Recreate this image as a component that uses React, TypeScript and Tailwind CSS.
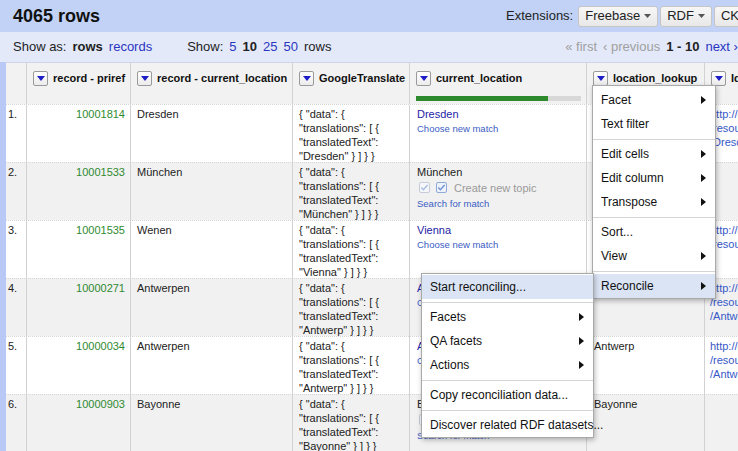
import { clsx } from 'clsx'

type Cur = { kind: 'match' | 'new'; name: string }
type Row = {
  n: string
  priref: string
  loc: string
  gt: string
  cur: Cur
  lookup: string
  id: string[]
}

const rows: Row[] = [
  { n: '1.', priref: '10001814', loc: 'Dresden', gt: 'Dresden', cur: { kind: 'match', name: 'Dresden' }, lookup: 'Dresden', id: ['http://dbpedia.org', '/resource', '/Dresden'] },
  { n: '2.', priref: '10001533', loc: 'München', gt: 'München', cur: { kind: 'new', name: 'München' }, lookup: '', id: [] },
  { n: '3.', priref: '10001535', loc: 'Wenen', gt: 'Vienna', cur: { kind: 'match', name: 'Vienna' }, lookup: 'Vienna', id: ['http://dbpedia.org', '/resource'] },
  { n: '4.', priref: '10000271', loc: 'Antwerpen', gt: 'Antwerp', cur: { kind: 'match', name: 'Antwerp' }, lookup: 'Antwerp', id: ['http://dbpedia.org', '/resource', '/Antwerp'] },
  { n: '5.', priref: '10000034', loc: 'Antwerpen', gt: 'Antwerp', cur: { kind: 'match', name: 'Antwerp' }, lookup: 'Antwerp', id: ['http://dbpedia.org', '/resource', '/Antwerp'] },
  { n: '6.', priref: '10000903', loc: 'Bayonne', gt: 'Bayonne', cur: { kind: 'new', name: 'Bayonne' }, lookup: 'Bayonne', id: [] },
]

type Item = { label: string; sub?: boolean; active?: boolean } | 'sep'

const columnMenu: Item[] = [
  { label: 'Facet', sub: true },
  { label: 'Text filter' },
  'sep',
  { label: 'Edit cells', sub: true },
  { label: 'Edit column', sub: true },
  { label: 'Transpose', sub: true },
  'sep',
  { label: 'Sort...' },
  { label: 'View', sub: true },
  'sep',
  { label: 'Reconcile', sub: true, active: true },
]

const reconMenu: Item[] = [
  { label: 'Start reconciling...', active: true },
  'sep',
  { label: 'Facets', sub: true },
  { label: 'QA facets', sub: true },
  { label: 'Actions', sub: true },
  'sep',
  { label: 'Copy reconciliation data...' },
  'sep',
  { label: 'Discover related RDF datasets...' },
]

function Caret() {
  return (
    <svg width="7" height="4" viewBox="0 0 7 4" className="ml-[4px]">
      <polygon points="0,0 7,0 3.5,4" fill="#555" />
    </svg>
  )
}

function ExtButton({ label }: { label: string }) {
  return (
    <button className="flex h-[21px] items-center rounded-[3px] border border-[#c6c6c6] bg-gradient-to-b from-[#f7f7f7] to-[#e8e8e8] px-[6px] text-[13px] text-[#222]">
      {label}
      <Caret />
    </button>
  )
}

function DropBtn() {
  return (
    <span className="flex h-[15px] w-[15px] shrink-0 items-center justify-center rounded-[2px] border border-[#9a9a9a] bg-gradient-to-b from-white to-[#ececec]">
      <svg width="8" height="5" viewBox="0 0 8 5">
        <polygon points="0,0 8,0 4,5" fill="#1c1cc8" />
      </svg>
    </span>
  )
}

function Check({ dim }: { dim?: boolean }) {
  return (
    <svg width="11" height="11" viewBox="0 0 11 11">
      <rect x="0.5" y="0.5" width="10" height="10" rx="1.5" fill={dim ? '#f5f7fb' : '#eef3fb'} stroke={dim ? '#c5ccd8' : '#8eaad8'} />
      <path d="M2.3 5.6 L4.4 7.7 L8.6 3" fill="none" stroke={dim ? '#a9bde0' : '#6f93d3'} strokeWidth="1.4" />
    </svg>
  )
}

function Arrow() {
  return (
    <svg width="5" height="8" viewBox="0 0 5 8">
      <polygon points="0,0 5,4 0,8" fill="#111" />
    </svg>
  )
}

function Menu({ items, className }: { items: Item[]; className: string }) {
  return (
    <div className={clsx('absolute border border-[#a9a9a9] bg-white shadow-[1px_2px_5px_rgba(0,0,0,0.28)]', className)}>
      {items.map((it, i) =>
        it === 'sep' ? (
          <div key={i} className="flex h-[6px] items-center">
            <div className="h-px w-full bg-[#d4d4d4]" />
          </div>
        ) : (
          <div
            key={i}
            className={clsx(
              'flex h-[24px] items-center justify-between whitespace-nowrap pl-[8px] pr-[9px] text-[12px] text-[#111]',
              it.active && 'bg-[#dae4f5]',
            )}
          >
            <span>{it.label}</span>
            {it.sub && <Arrow />}
          </div>
        ),
      )}
    </div>
  )
}

function HeadCell({ label, children }: { label: string; children?: React.ReactNode }) {
  return (
    <div className="border-r border-[#d2d2d2] pl-[6px] pt-[7px]">
      <div className="flex items-center gap-[5px] whitespace-nowrap">
        <DropBtn />
        <span className="text-[11px] font-bold text-[#111]">{label}</span>
      </div>
      {children}
    </div>
  )
}

function CurCell({ cur }: { cur: Cur }) {
  if (cur.kind === 'match') {
    return (
      <div className="border-r border-[#d2d2d2] pl-[7px] pt-[2px]">
        <div className="h-[14px] text-[11px] leading-[14px] text-[#2424a6]">{cur.name}</div>
        <div className="h-[16px] text-[9.5px] leading-[16px] text-[#3b5cc4]">Choose new match</div>
      </div>
    )
  }
  return (
    <div className="border-r border-[#d2d2d2] pl-[7px] pt-[2px]">
      <div className="h-[14px] text-[11px] leading-[14px]">{cur.name}</div>
      <div className="flex h-[17px] items-center pl-[2px]">
        <Check dim />
        <span className="ml-[6px]">
          <Check />
        </span>
        <span className="ml-[7px] text-[11px] text-[#9a9a9a]">Create new topic</span>
      </div>
      <div className="h-[15px] text-[9.5px] leading-[15px] text-[#3b5cc4]">Search for match</div>
    </div>
  )
}

export default function App() {
  return (
    <div className="relative h-[451px] w-[738px] overflow-hidden bg-[#e3e9f9] font-['Liberation_Sans',Arial,sans-serif] text-[#222]">
      {/* title bar */}
      <header className="flex h-[32px] items-center bg-[#c1d2f6] pl-[13px]">
        <h1 className="whitespace-nowrap text-[18px] font-bold text-[#111]">4065 rows</h1>
        <div className="-mr-[37px] ml-auto flex shrink-0 items-center gap-[2px] whitespace-nowrap">
          <span className="mr-[3px] text-[13px]">Extensions:</span>
          <ExtButton label="Freebase" />
          <ExtButton label="RDF" />
          <ExtButton label="CKAN" />
        </div>
      </header>

      {/* show bar */}
      <div className="flex h-[30px] items-center whitespace-nowrap pl-[13px] text-[13px]">
        <div className="flex items-center gap-[6px]">
          <span>Show as:</span>
          <span className="font-bold">rows</span>
          <span className="text-[#2a36c0]">records</span>
        </div>
        <div className="ml-[35px] flex items-center gap-[6px]">
          <span>Show:</span>
          <span className="text-[#2a36c0]">5</span>
          <span className="font-bold">10</span>
          <span className="text-[#2a36c0]">25</span>
          <span className="text-[#2a36c0]">50</span>
          <span>rows</span>
        </div>
        <div className="-mr-[37px] ml-auto flex shrink-0 items-center gap-[6px]">
          <span className="text-[#a0a0a0]">« first</span>
          <span className="text-[#a0a0a0]">‹ previous</span>
          <span className="font-bold">1 - 10</span>
          <span className="text-[#2a36c0]">next ›</span>
          <span className="text-[#2a36c0]">last »</span>
        </div>
      </div>

      {/* table */}
      <div className="flex">
        <div className="w-[6px] shrink-0 bg-[#b7c9f4]" />
        <div className="shrink-0 bg-white">
          <div className="grid h-[42px] grid-cols-[21px_104px_162px_117px_177px_118px_140px] border-t border-[#cdd5e8] bg-[#f2f2f2]">
            <div className="border-r border-[#d2d2d2]" />
            <HeadCell label="record - priref" />
            <HeadCell label="record - current_location" />
            <HeadCell label="GoogleTranslate" />
            <HeadCell label="current_location">
              <div className="mr-[5px] mt-[9px] h-[5px] bg-[#d8d8d8]">
                <div className="h-full w-[80%] bg-[#2d8a2d]" />
              </div>
            </HeadCell>
            <HeadCell label="location_lookup" />
            <HeadCell label="Id" />
          </div>

          {rows.map((r, i) => (
            <div
              key={r.priref}
              className={clsx(
                'grid h-[58px] grid-cols-[21px_104px_162px_117px_177px_118px_140px] border-t border-dotted border-[#d6d6d6] text-[11px] leading-[14px]',
                i % 2 === 1 ? 'bg-[#f1f1f1]' : 'bg-white',
              )}
            >
              <div className="border-r border-[#d2d2d2] pl-[2px] pt-[2px]">{r.n}</div>
              <div className="border-r border-[#d2d2d2] pr-[5px] pt-[2px] text-right text-[#2f8a2f]">{r.priref}</div>
              <div className="border-r border-[#d2d2d2] pl-[6px] pt-[2px]">{r.loc}</div>
              <div className="whitespace-nowrap border-r border-[#d2d2d2] pl-[6px] pt-[2px]">
                <div>{'{ "data": {'}</div>
                <div>{'"translations": [ {'}</div>
                <div>{'"translatedText":'}</div>
                <div>{`"${r.gt}" } ] } }`}</div>
              </div>
              <CurCell cur={r.cur} />
              <div className="border-r border-[#d2d2d2] pl-[7px] pt-[2px]">{r.lookup}</div>
              <div className="whitespace-nowrap pl-[5px] pt-[2px] text-[#3658c8]">
                {r.id.map((l) => (
                  <div key={l}>{l}</div>
                ))}
              </div>
            </div>
          ))}
        </div>
      </div>

      {/* column menu + reconcile submenu */}
      <Menu items={columnMenu} className="left-[592px] top-[85px] w-[124px] pt-[2px]" />
      <Menu items={reconMenu} className="left-[421px] top-[273px] w-[173px] pt-[1px]" />
    </div>
  )
}
